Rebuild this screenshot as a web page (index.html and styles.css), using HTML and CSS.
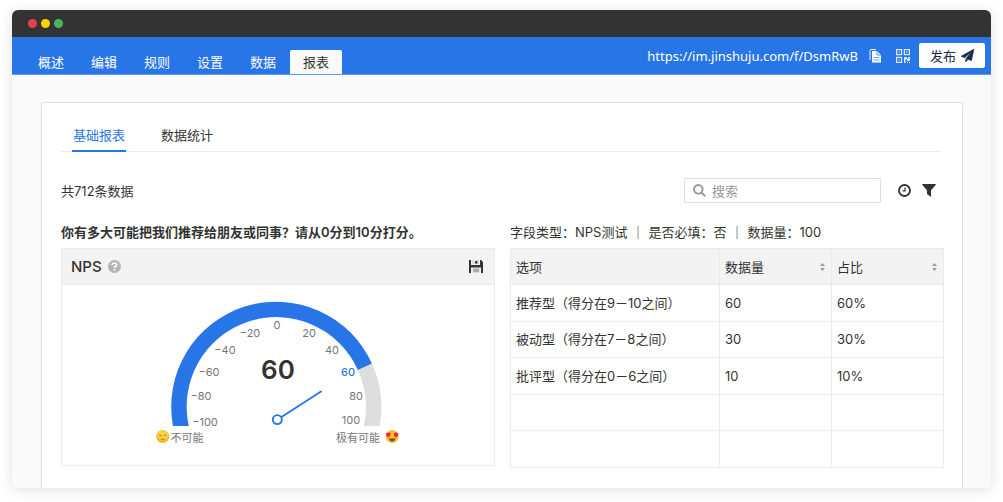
FILE: index.html
```html
<!DOCTYPE html>
<html lang="zh-CN">
<head>
<meta charset="utf-8">
<meta name="viewport" content="width=device-width, initial-scale=1">
<title>报表</title>
<link rel="stylesheet" href="styles.css">
</head>
<body>
<div class="window">
  <div class="titlebar"><span class="dot dot-red"></span><span class="dot dot-yellow"></span><span class="dot dot-green"></span></div>
  <header class="topbar">
    <nav class="nav">
      <a href="#">概述</a>
      <a href="#">编辑</a>
      <a href="#">规则</a>
      <a href="#">设置</a>
      <a href="#">数据</a>
      <a href="#" class="active">报表</a>
    </nav>
    <div class="share">
      <a class="url" href="#">https://im.jinshuju.com/f/DsmRwB</a>
      <button class="icon-btn copy" aria-label="复制链接">
        <svg width="12" height="14" viewBox="0 0 12 14"><path d="M1 11V1.5Q1 .5 2 .5H7" fill="none" stroke="#e3edfc"/><path d="M3 2h5l4 4v7.500H3z" fill="#fff"/><path d="M8 2v4h4" fill="none" stroke="#2875e8" stroke-width=".8"/><path d="M4.500 8.500h6M4.500 11h6" stroke="#6ba0ef"/></svg>
      </button>
      <button class="icon-btn qr" aria-label="二维码">
        <svg width="14" height="14" viewBox="0 0 14 14" fill="none" stroke="#dce9fc" stroke-width="1.2"><path d="M.6.600h5v5h-5zM8.400.600h5v5h-5zM.6 8.400h5v5h-5z"/><path d="M2.500 2.500h1.200v1.200H2.500zM10.300 2.500h1.200v1.200h-1.200zM2.500 10.300h1.200v1.200H2.500zM8 8h3v1.500h1V8h2v4h-3v-1.500H9.500V14H8zM11 13h1v1h-1zM13 13h1v1h-1z" fill="#dce9fc" stroke="none"/></svg>
      </button>
      <button class="publish">发布
        <svg width="13" height="13" viewBox="0 0 13 13"><path d="M13 0 0 7.300l3.600 1.500L11 2.300 5 9.500l5.500 2.200zM4.700 9.900V13l2.200-2.200z" fill="#1b2a4c" stroke="#1b2a4c" stroke-width=".5"/></svg>
      </button>
    </div>
  </header>
  <main class="page">
    <section class="card">
      <nav class="subtabs">
        <a href="#" class="active">基础报表</a>
        <a href="#">数据统计</a>
      </nav>
      <div class="toolbar">
        <span class="total">共712条数据</span>
        <label class="search">
          <svg width="13" height="13" viewBox="0 0 13 13" fill="none" stroke="#999" stroke-width="1.900"><circle cx="5.300" cy="5.300" r="4.300"/><path d="m8.500 8.500 3.800 3.800"/></svg>
          <input type="text" placeholder="搜索" aria-label="搜索">
        </label>
        <button class="icon-btn clock" aria-label="时间">
          <svg width="13" height="13" viewBox="0 0 13 13" fill="none" stroke="#333"><circle cx="6.500" cy="6.500" r="5.500" stroke-width="1.900"/><path d="M7 3.500v3.300H4.500" stroke-width="1.200"/></svg>
        </button>
        <button class="icon-btn" aria-label="筛选">
          <svg width="14" height="13" viewBox="0 0 14 13"><path d="M.6 0h12.800q.6.200.300.900L9 6.200V13L5 9.900V6.200L.3.900Q0 .200.600 0z" fill="#333"/></svg>
        </button>
      </div>
      <div class="columns">
        <section class="col">
          <h2 class="question">你有多大可能把我们推荐给朋友或同事？请从0分到10分打分。</h2>
          <div class="panel">
            <header class="panel-head">
              <h3>NPS</h3>
              <button class="icon-btn" aria-label="帮助">
                <svg width="13" height="13" viewBox="0 0 13 13"><circle cx="6.500" cy="6.500" r="6.500" fill="#b5b5b5"/><path d="M4.300 5Q4.300 3 6.500 3T8.700 4.900Q8.700 6 6.600 6.700V8" fill="none" stroke="#fff" stroke-width="1.700"/><path d="M5.700 9h1.700v1.600H5.700z" fill="#fff"/></svg>
              </button>
              <button class="icon-btn save" aria-label="保存">
                <svg width="14" height="13" viewBox="0 0 14 13"><path d="M0 0h2v5h9V0h1l2 2v11h-2V7.500H2V13H0z" fill="#333"/><path d="M3 0h7v4.200H3z" fill="#ddd"/><path d="M6.300 1h2v2.600h-2z" fill="#222"/><path d="M4 8.500h6.200v3.800H4z" fill="#ababab"/></svg>
              </button>
            </header>
            <div class="panel-body">
              <svg class="gauge" viewBox="150 286 256 172" role="img" aria-label="NPS 60">
                <path d="M371.900 363.500A105 105 0 0 1 379.600 426H363.800A89.500 89.500 0 0 0 357.800 369.900Z" fill="#dedede"/>
                <path d="M173 426A105 105 0 0 1 371.900 363.500L357.800 369.900A89.500 89.500 0 0 0 188.800 426Z" fill="#2875e8"/>
                <g class="ticks">
                  <text x="277" y="329">0</text>
                  <text x="250" y="337">−20</text><text x="309" y="337">20</text>
                  <text x="225" y="354">−40</text><text x="332" y="354">40</text>
                  <text x="209" y="376">−60</text><text x="348" y="376" class="current">60</text>
                  <text x="201" y="400">−80</text><text x="356" y="400">80</text>
                  <text x="205" y="426">−100</text><text x="351" y="424">100</text>
                  <text x="187" y="442">不可能</text><text x="358" y="442">极有可能</text>
                </g>
                <text x="278" y="379" class="score">60</text>
                <path d="M281.500 417 321 391.500" stroke="#2875e8" stroke-width="1.900" stroke-linecap="round"/>
                <circle cx="277.300" cy="419.600" r="4.500" fill="#fff" stroke="#2875e8" stroke-width="1.900"/>
                <g>
                  <circle cx="162.700" cy="436.500" r="6.500" fill="#f3b62c"/>
                  <ellipse cx="162.700" cy="435" rx="5.500" ry="4.800" fill="#fbd044"/>
                  <path d="m159.200 434.800 2.300 1.200m4.700-1.200-2.300 1.200" stroke="#a87420"/>
                  <path d="M161 439.500q1.700-1 3.400 0" stroke="#a87420" fill="none"/>
                </g>
                <g>
                  <circle cx="392.200" cy="436.500" r="6.500" fill="#f6bd32"/>
                  <path d="M388.700 437.500c-4-2-3-5.500-.8-4.500 1.600-1.700 4.600.8.800 4.500zM395.700 437.500c4-2 3-5.500.8-4.500-1.600-1.700-4.600.8-.8 4.500z" fill="#e8293b"/>
                  <path d="M388.800 438.600h6.800q-1 3-3.400 3t-3.400-3z" fill="#87451a"/>
                </g>
              </svg>
            </div>
          </div>
        </section>
        <section class="col">
          <p class="meta"><span>字段类型：NPS测试</span><span>｜</span><span>是否必填：否</span><span>｜</span><span>数据量：100</span></p>
          <table class="stats">
            <colgroup><col class="c-name"><col class="c-num"><col class="c-num"></colgroup>
            <thead>
              <tr>
                <th>选项</th>
                <th><div class="sortable">数据量<svg width="5" height="8" viewBox="0 0 5 8" fill="#999"><path d="M2.500 0 5 3H0zM0 5h5L2.500 8z"/></svg></div></th>
                <th><div class="sortable">占比<svg width="5" height="8" viewBox="0 0 5 8" fill="#999"><path d="M2.500 0 5 3H0zM0 5h5L2.500 8z"/></svg></div></th>
              </tr>
            </thead>
            <tbody>
              <tr><td>推荐型（得分在9－10之间）</td><td>60</td><td>60%</td></tr>
              <tr><td>被动型（得分在7－8之间）</td><td>30</td><td>30%</td></tr>
              <tr><td>批评型（得分在0－6之间）</td><td>10</td><td>10%</td></tr>
              <tr><td></td><td></td><td></td></tr>
              <tr><td></td><td></td><td></td></tr>
            </tbody>
          </table>
        </section>
      </div>
    </section>
  </main>
</div>
</body>
</html>
```
FILE: styles.css
```css
* { box-sizing: border-box; }
body {
  margin: 0;
  padding: 10px 12px 14px;
  background: #fff;
  color: #333;
  font: 13px/20px "Inter", "Noto Sans CJK SC", sans-serif;
}
a { color: inherit; text-decoration: none; }
h2, h3, p { margin: 0; }
svg { display: block; flex: none; }
button { font: inherit; color: inherit; cursor: pointer; }
.window {
  border-radius: 6px;
  overflow: hidden;
  background: #fafafa;
  box-shadow: 0 2px 14px rgba(0, 0, 0, .12);
}
.titlebar {
  display: flex;
  align-items: center;
  gap: 4px;
  height: 27px;
  padding: 0 16px;
  background: #333;
}
.dot { width: 9px; height: 9px; border-radius: 50%; }
.dot-red { background: #e4414f; }
.dot-yellow { background: #ffd000; }
.dot-green { background: #47b55b; }
.topbar {
  display: flex;
  justify-content: space-between;
  height: 38px;
  padding: 0 6px 0 13px;
  background: #2875e8;
  border-bottom: 1px solid #5e98ee;
  color: #fff;
}
.nav { display: flex; align-items: flex-end; gap: 1px; }
.nav a { padding: 2px 13px; border-radius: 2px 2px 0 0; }
.nav .active { background: #fafafa; color: #333; }
.share { display: flex; align-items: center; }
.url { font-family: "Noto Sans", sans-serif; }
.icon-btn { padding: 0; border: 0; background: none; }
.copy { margin-left: 11px; }
.qr { margin: 0 9px 0 15px; }
.publish {
  display: flex;
  align-items: center;
  gap: 5px;
  height: 25px;
  padding: 0 11px;
  border: 0;
  border-radius: 2px;
  background: #fff;
  color: #1b2a4c;
}
.page { padding: 27px 28px 0 29px; }
.card {
  padding: 16px 18px 20px 19px;
  border: 1px solid #e0e0e0;
  border-bottom: 0;
  border-radius: 3px 3px 0 0;
  background: #fff;
}
.subtabs {
  display: flex;
  gap: 34px;
  margin-right: 3px;
  padding-left: 11px;
  border-bottom: 1px solid #ebebeb;
}
.subtabs a { padding: 6px 1px 5px; margin-bottom: -1px; border-bottom: 2px solid transparent; }
.subtabs .active { color: #2875e8; border-color: #2875e8; }
.toolbar { display: flex; align-items: center; margin-top: 26px; padding-right: 8px; }
.total { flex: 1; }
.search {
  display: flex;
  align-items: center;
  gap: 6px;
  width: 197px;
  height: 25px;
  margin-right: 17px;
  padding: 0 8px;
  border: 1px solid #dedede;
  border-radius: 1px;
}
.search input {
  flex: 1;
  min-width: 0;
  padding: 0;
  border: 0;
  outline: 0;
  background: none;
  font: inherit;
}
.search input::placeholder { color: #999; opacity: 1; }
.clock { margin-right: 11px; }
.columns { display: grid; grid-template-columns: 1fr 1fr; gap: 15px; margin-top: 19px; }
.question { margin-bottom: 6px; font-size: 13px; font-weight: 600; }
.panel { border: 1px solid #ebebeb; }
.panel-head {
  display: flex;
  align-items: center;
  gap: 6px;
  height: 36px;
  padding: 0 11px 0 9px;
  background: #f3f3f3;
  border-bottom: 1px solid #ebebeb;
}
.panel-head h3 { font-size: 15px; font-weight: 500; }
.save { margin-left: auto; }
.panel-body { display: flex; justify-content: center; padding: 1px 0 7px; }
.gauge { width: 256px; height: 172px; }
.ticks { fill: #777; font-size: 11px; text-anchor: middle; }
.ticks .current { fill: #2875e8; font-weight: 500; }
.score { fill: #333; font-size: 26px; font-weight: 600; text-anchor: middle; }
.meta { display: flex; gap: 4px; margin-bottom: 6px; white-space: nowrap; }
.stats { width: 100%; height: 220px; border-collapse: collapse; table-layout: fixed; }
.c-num { width: 112px; }
.stats th, .stats td {
  height: 36px;
  padding: 0 6px 0 5px;
  border: 1px solid #ebebeb;
  text-align: left;
  font-weight: 400;
}
.stats th { background: #f3f3f3; }
.sortable { display: flex; align-items: center; justify-content: space-between; }
```
